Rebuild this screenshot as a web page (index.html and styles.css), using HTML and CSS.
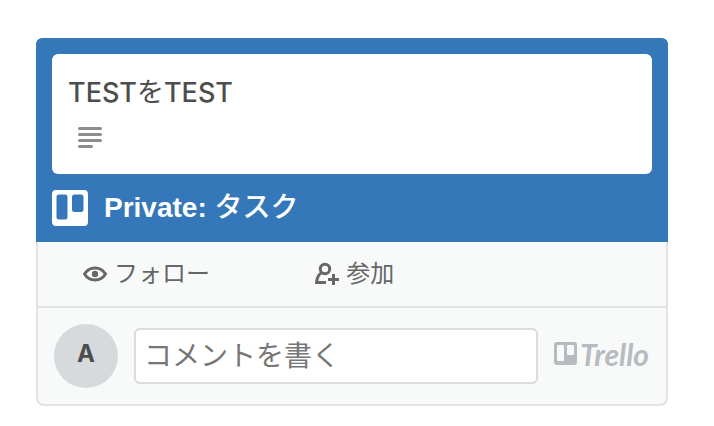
FILE: index.html
```html
<!DOCTYPE html>
<html lang="ja">

<head>
  <meta charset="UTF-8">
  <meta name="viewport" content="width=device-width, initial-scale=1.0">
  <title>Trello</title>
  <link rel="stylesheet" href="styles.css">
</head>

<body>
  <div class="card">
    <div class="card-header">
      <div class="card-body">
        <div class="card-ttl">TEST<span class="kana-regular">を</span>TEST</div>
        <svg class="icon-desc" width="24" height="22" viewBox="0 0 24 22" aria-hidden="true">
          <path d="M1.5 1.5h21M1.5 7.5h21M1.5 13.5h21M1.5 19.5h12" />
        </svg>
      </div>
      <div class="board">
        <svg class="icon-board" width="36" height="36" viewBox="0 0 36 36" aria-hidden="true">
          <path fill-rule="evenodd" d="M4 0h28a4 4 0 0 1 4 4v28a4 4 0 0 1-4 4H4a4 4 0 0 1-4-4V4a4 4 0 0 1 4-4zM7 4.500a2.500 2.500 0 0 0-2.500 2.500v20a2.500 2.500 0 0 0 2.500 2.500h6a2.500 2.500 0 0 0 2.500-2.500V7A2.500 2.500 0 0 0 13 4.500zM22.500 4.500A2.500 2.500 0 0 0 20 7v12.500a2.500 2.500 0 0 0 2.500 2.500h6.500a2.500 2.500 0 0 0 2.500-2.500V7A2.500 2.500 0 0 0 29 4.500z" />
        </svg>
        <div class="board-name">Private: <span class="kana">タスク</span></div>
      </div>
    </div>

    <!-- actions -->
    <div class="actions">
      <div class="actions-item">
        <button type="button" class="btn">
          <svg width="24" height="24" viewBox="0 0 24 24" aria-hidden="true">
            <path class="line" d="M1.500 12C4 8 7.700 6 12 6s8 2 10.500 6c-2.500 4-6.200 6-10.500 6s-8-2-10.500-6z" />
            <circle cx="12" cy="12" r="3.200" />
          </svg>
          フォロー
        </button>
      </div>
      <div class="actions-item">
        <button type="button" class="btn">
          <svg width="24" height="24" viewBox="0 0 24 24" aria-hidden="true">
            <circle class="line" cx="10" cy="7" r="4.700" />
            <path class="line" d="M7 10.500C3.800 12 1.900 15.500 1.600 20.500H11" />
            <path class="line" d="M18.500 12v11M13 17.500h11" />
          </svg>
          参加
        </button>
      </div>
    </div>

    <!-- comment -->
    <div class="comment">
      <div class="avatar">A</div>
      <input type="text" class="comment-input" placeholder="コメントを書く" aria-label="コメントを書く">
      <a href="#" class="logo">
        <svg width="23" height="23" viewBox="0 0 23 23" aria-hidden="true">
          <path fill-rule="evenodd" d="M3 0h17a3 3 0 0 1 3 3v17a3 3 0 0 1-3 3H3a3 3 0 0 1-3-3V3a3 3 0 0 1 3-3zM4 3a1 1 0 0 0-1 1v14a1 1 0 0 0 1 1h5a1 1 0 0 0 1-1V4a1 1 0 0 0-1-1zM14 3a1 1 0 0 0-1 1v8a1 1 0 0 0 1 1h5a1 1 0 0 0 1-1V4a1 1 0 0 0-1-1z" />
        </svg>
        <span class="logo-text">Trello</span>
      </a>
    </div>
  </div>
</body>

</html>
```
FILE: styles.css
```css
* {
  box-sizing: border-box;
}

body {
  margin: 0;
  padding: 38px 46px 20px 36px;
  font-family: Inter, "Noto Sans CJK JP", sans-serif;
  font-size: 28px;
  line-height: 36px;
  color: #4d4d4d;
  background: #fff;
}

.card {
  border-radius: 8px;
  background: #f8faf9;
}

.card-header {
  padding: 16px;
  border-radius: 6px 6px 0 0;
  background: #3478ba;
}

.card-body {
  min-height: 120px;
  padding: 20px 16px;
  border-radius: 6px;
  background: #fff;
}

.card-ttl {
  font-size: 27px;
  font-weight: 500;
  line-height: 37px;
}

.kana-regular {
  font-weight: 400;
}

.icon-desc {
  display: block;
  margin: 16px 10px 0;
  fill: none;
  stroke: #8c8c8c;
  stroke-width: 3;
  stroke-linecap: round;
}

.board {
  display: flex;
  align-items: center;
  gap: 16px;
  margin-top: 16px;
  color: #fff;
}

.icon-board {
  flex: none;
  fill: #fff;
}

.board-name {
  font-family: "Liberation Sans", "Noto Sans CJK JP", sans-serif;
  font-weight: 700;
}

.kana {
  font-weight: 500;
}

.actions {
  display: flex;
  border: 2px solid #e2e4e4;
  border-top: none;
}

.actions-item {
  flex: 0 0 37%;
  padding: 14px 0 14px 45px;
}

.btn {
  display: flex;
  align-items: center;
  gap: 7px;
  padding: 0;
  border: none;
  background: none;
  font-family: inherit;
  font-size: 24px;
  line-height: 36px;
  color: #666;
  cursor: pointer;
}

.btn svg {
  fill: #666;
}

.btn .line {
  fill: none;
  stroke: #666;
  stroke-width: 3;
}

.comment {
  display: flex;
  align-items: center;
  gap: 16px;
  padding: 16px;
  border: 2px solid #e2e4e4;
  border-top: none;
  border-radius: 0 0 8px 8px;
}

.avatar {
  flex: none;
  width: 64px;
  height: 64px;
  border-radius: 50%;
  background: #d6dadc;
  font-size: 24px;
  font-weight: 700;
  line-height: 60px;
  text-align: center;
}

.comment-input {
  flex: 1;
  min-width: 0;
  height: 56px;
  padding: 0 8px;
  border: 2px solid #dcdcdc;
  border-radius: 6px;
  background: #fff;
  font-family: inherit;
  font-size: 28px;
  color: #4d4d4d;
}

.comment-input::placeholder {
  color: #757575;
}

.logo {
  display: flex;
  flex: none;
  align-items: center;
  gap: 3px;
  width: 96px;
  padding-bottom: 5px;
  color: #b6bbbf;
  text-decoration: none;
}

.logo svg {
  flex: none;
  fill: #b6bbbf;
}

.logo-text {
  font-family: Lato, sans-serif;
  font-size: 30px;
  font-style: italic;
  font-weight: 700;
  line-height: 32px;
}
```
